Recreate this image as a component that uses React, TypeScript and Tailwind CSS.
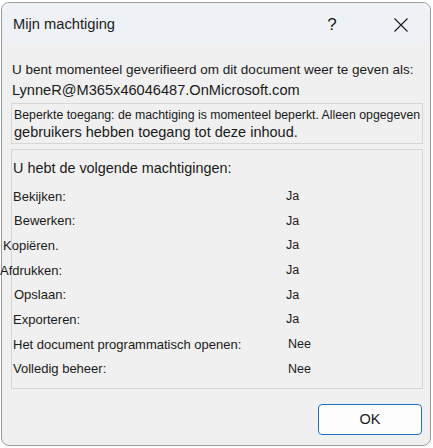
import React from 'react';

interface Row {
  label: string;
  value: string;
  shift: string;
}

const rows: Row[] = [
  { label: 'Bekijken:', value: 'Ja', shift: 'ml-0' },
  { label: 'Bewerken:', value: 'Ja', shift: 'ml-[1px]' },
  { label: 'Kopiëren.', value: 'Ja', shift: '-ml-[10px]' },
  { label: 'Afdrukken:', value: 'Ja', shift: '-ml-[13px]' },
  { label: 'Opslaan:', value: 'Ja', shift: 'ml-[1px]' },
  { label: 'Exporteren:', value: 'Ja', shift: 'ml-0' },
  { label: 'Het document programmatisch openen:', value: 'Nee', shift: 'ml-0' },
  { label: 'Volledig beheer:', value: 'Nee', shift: 'ml-0' },
];

export default function App() {
  return (
    <div className="w-[433px] h-[448px] bg-white pt-[2px] pl-[1px] pr-[2px] text-[#1a1a1a]" style={{ fontFamily: '"Liberation Sans", Arial, sans-serif' }}>
      <div className="h-[444px] rounded-[8px] border border-[#9c9c9c] bg-[#f0f0f0] flex flex-col">

        {/* TITLE BAR */}
        <div className="h-[40px] shrink-0 rounded-t-[7px] bg-[#eef2f7] flex items-center pl-[11px] pt-[3px]">
          <span className="text-[14.7px] flex-1">Mijn machtiging</span>
          <span className="text-[17px] w-[20px] text-center mr-[52px]">?</span>
          <svg width="14" height="14" viewBox="0 0 14 14" className="mr-[22px]">
            <path d="M0.5 0.5 L13.5 13.5 M13.5 0.5 L0.5 13.5" stroke="#1a1a1a" strokeWidth="1.1" fill="none" />
          </svg>
        </div>

        {/* BODY */}
        <div className="flex-1 pl-[9px] pr-[7px] pt-[17px] flex flex-col">
          <p className="text-[13.5px] leading-[20px] pl-[1px] whitespace-nowrap">U bent momenteel geverifieerd om dit document weer te geven als:</p>
          <p className="text-[14.6px] leading-[20px] pl-[1px] whitespace-nowrap">LynneR@M365x46046487.OnMicrosoft.com</p>

          <div className="mt-[3px] h-[41px] shrink-0 border border-[#d6d6d6] pl-[2px] pt-[4px]">
            <p className="text-[12.3px] leading-[15px] whitespace-nowrap">Beperkte toegang: de machtiging is momenteel beperkt. Alleen opgegeven</p>
            <p className="text-[14.5px] leading-[19px] whitespace-nowrap">gebruikers hebben toegang tot deze inhoud.</p>
          </div>

          <div className="mt-[5px] h-[240px] shrink-0 border border-[#d6d6d6] pl-[1px] pt-[9px]">
            <p className="text-[14.4px] leading-[18px] mb-[7px] whitespace-nowrap">U hebt de volgende machtigingen:</p>
            {rows.map(row => (
              <div key={row.label} className="flex items-center h-[24.7px]">
                <div className="w-[273px] shrink-0">
                  <span className={`block text-[13px] whitespace-nowrap ${row.shift}`}>{row.label}</span>
                </div>
                <span className={`text-[12.5px] ${row.value === 'Nee' ? 'ml-[2px]' : ''}`}>{row.value}</span>
              </div>
            ))}
          </div>

          <div className="flex justify-end mt-[15px] pr-[1px]">
            <button className="w-[104px] h-[31px] rounded-[4px] border border-[#1a73c8] bg-[#fdfdfd] text-[14.5px]">OK</button>
          </div>
        </div>
      </div>
    </div>
  );
}
